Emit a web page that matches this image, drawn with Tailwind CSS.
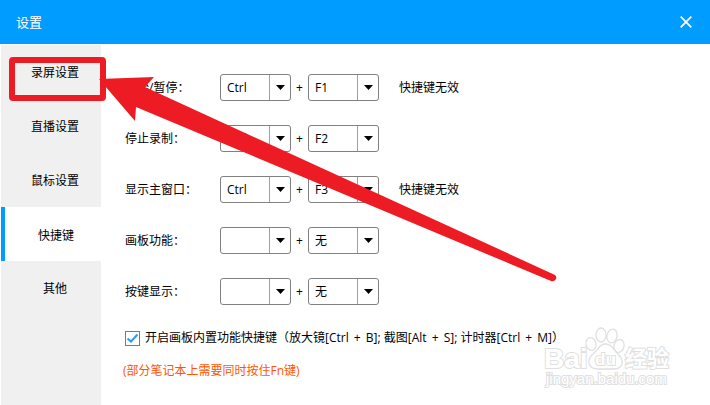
<!DOCTYPE html>
<html lang="zh-CN">
  <head>
    <meta charset="UTF-8" />
    <meta name="viewport" content="width=device-width, initial-scale=1.0" />
    <title>设置</title>
    <script src="https://cdn.jsdelivr.net/npm/@tailwindcss/browser@4"></script>
  </head>
  <body
    class="relative min-h-screen flex flex-col overflow-x-hidden bg-white text-black text-[12px] leading-4 font-['Open_Sans','Noto_Sans_CJK_SC',sans-serif]"
  >
    <header
      class="h-11 shrink-0 flex items-center justify-between pl-4 pr-[18px] bg-[#009cff] text-white"
    >
      <h1 class="text-[13px]">设置</h1>
      <button type="button" aria-label="关闭">
        <svg class="w-3 h-3" viewBox="0 0 12 12" fill="none" stroke="currentColor" stroke-width="1.7">
          <path d="M0.7 0.7 11.3 11.3M11.3 0.7 0.7 11.3" />
        </svg>
      </button>
    </header>

    <div class="flex-1 flex pl-px pt-px">
      <nav class="w-[100px] shrink-0 flex flex-col bg-[#f0f0f0]">
        <a href="#record" class="h-[54px] flex items-center justify-center pl-2 pt-0.5">录屏设置</a>
        <a href="#live" class="h-[54px] flex items-center justify-center pl-2 pt-0.5">直播设置</a>
        <a href="#mouse" class="h-[54px] flex items-center justify-center pl-2 pt-0.5">鼠标设置</a>
        <a
          href="#hotkey"
          class="h-[54px] flex items-center justify-center pl-1.5 pt-1 bg-white border-l-4 border-[#009cff]"
          >快捷键</a
        >
        <a href="#other" class="h-[54px] flex items-center justify-center pl-2 pt-0.5">其他</a>
      </nav>

      <main class="flex-1 pl-6 pt-[29px]">
        <div class="flex flex-col gap-6">
          <!-- start / pause -->
          <div class="flex items-center h-[27px]">
            <label for="start-mod" class="w-[95px]">开始/暂停：</label>
            <div class="relative w-[71px] h-[27px]">
              <select id="start-mod" class="appearance-none w-full h-full pl-[6px] bg-white border border-[#808080] rounded-[3px]">
                <option>Ctrl</option>
              </select>
              <span class="absolute inset-y-px right-px w-[21px] border-l border-[#a0a0a0] flex items-center justify-center pointer-events-none">
                <svg class="w-[9px] h-[5px]" viewBox="0 0 9 5"><path d="M0 0h9L4.5 5z" /></svg>
              </span>
            </div>
            <span class="w-[17px] text-center">+</span>
            <div class="relative w-[71px] h-[27px]">
              <select aria-label="开始/暂停" class="appearance-none w-full h-full pl-[6px] bg-white border border-[#808080] rounded-[3px]">
                <option>F1</option>
              </select>
              <span class="absolute inset-y-px right-px w-[21px] border-l border-[#a0a0a0] flex items-center justify-center pointer-events-none">
                <svg class="w-[9px] h-[5px]" viewBox="0 0 9 5"><path d="M0 0h9L4.5 5z" /></svg>
              </span>
            </div>
            <span class="pl-5">快捷键无效</span>
          </div>

          <!-- stop -->
          <div class="flex items-center h-[27px]">
            <label for="stop-mod" class="w-[95px]">停止录制：</label>
            <div class="relative w-[71px] h-[27px]">
              <select id="stop-mod" class="appearance-none w-full h-full pl-[6px] bg-white border border-[#808080] rounded-[3px]">
                <option>Ctrl</option>
              </select>
              <span class="absolute inset-y-px right-px w-[21px] border-l border-[#a0a0a0] flex items-center justify-center pointer-events-none">
                <svg class="w-[9px] h-[5px]" viewBox="0 0 9 5"><path d="M0 0h9L4.5 5z" /></svg>
              </span>
            </div>
            <span class="w-[17px] text-center">+</span>
            <div class="relative w-[71px] h-[27px]">
              <select aria-label="停止录制" class="appearance-none w-full h-full pl-[6px] bg-white border border-[#808080] rounded-[3px]">
                <option>F2</option>
              </select>
              <span class="absolute inset-y-px right-px w-[21px] border-l border-[#a0a0a0] flex items-center justify-center pointer-events-none">
                <svg class="w-[9px] h-[5px]" viewBox="0 0 9 5"><path d="M0 0h9L4.5 5z" /></svg>
              </span>
            </div>
          </div>

          <!-- show main window -->
          <div class="flex items-center h-[27px]">
            <label for="show-mod" class="w-[95px]">显示主窗口：</label>
            <div class="relative w-[71px] h-[27px]">
              <select id="show-mod" class="appearance-none w-full h-full pl-[6px] bg-white border border-[#808080] rounded-[3px]">
                <option>Ctrl</option>
              </select>
              <span class="absolute inset-y-px right-px w-[21px] border-l border-[#a0a0a0] flex items-center justify-center pointer-events-none">
                <svg class="w-[9px] h-[5px]" viewBox="0 0 9 5"><path d="M0 0h9L4.5 5z" /></svg>
              </span>
            </div>
            <span class="w-[17px] text-center">+</span>
            <div class="relative w-[71px] h-[27px]">
              <select aria-label="显示主窗口" class="appearance-none w-full h-full pl-[6px] bg-white border border-[#808080] rounded-[3px]">
                <option>F3</option>
              </select>
              <span class="absolute inset-y-px right-px w-[21px] border-l border-[#a0a0a0] flex items-center justify-center pointer-events-none">
                <svg class="w-[9px] h-[5px]" viewBox="0 0 9 5"><path d="M0 0h9L4.5 5z" /></svg>
              </span>
            </div>
            <span class="pl-5">快捷键无效</span>
          </div>

          <!-- drawing board -->
          <div class="flex items-center h-[27px]">
            <label for="board-mod" class="w-[95px]">画板功能：</label>
            <div class="relative w-[71px] h-[27px]">
              <select id="board-mod" class="appearance-none w-full h-full pl-[6px] bg-white border border-[#808080] rounded-[3px]">
                <option></option>
              </select>
              <span class="absolute inset-y-px right-px w-[21px] border-l border-[#a0a0a0] flex items-center justify-center pointer-events-none">
                <svg class="w-[9px] h-[5px]" viewBox="0 0 9 5"><path d="M0 0h9L4.5 5z" /></svg>
              </span>
            </div>
            <span class="w-[17px] text-center">+</span>
            <div class="relative w-[71px] h-[27px]">
              <select aria-label="画板功能" class="appearance-none w-full h-full pl-[6px] bg-white border border-[#808080] rounded-[3px]">
                <option>无</option>
              </select>
              <span class="absolute inset-y-px right-px w-[21px] border-l border-[#a0a0a0] flex items-center justify-center pointer-events-none">
                <svg class="w-[9px] h-[5px]" viewBox="0 0 9 5"><path d="M0 0h9L4.5 5z" /></svg>
              </span>
            </div>
          </div>

          <!-- key display -->
          <div class="flex items-center h-[27px]">
            <label for="keys-mod" class="w-[95px]">按键显示：</label>
            <div class="relative w-[71px] h-[27px]">
              <select id="keys-mod" class="appearance-none w-full h-full pl-[6px] bg-white border border-[#808080] rounded-[3px]">
                <option></option>
              </select>
              <span class="absolute inset-y-px right-px w-[21px] border-l border-[#a0a0a0] flex items-center justify-center pointer-events-none">
                <svg class="w-[9px] h-[5px]" viewBox="0 0 9 5"><path d="M0 0h9L4.5 5z" /></svg>
              </span>
            </div>
            <span class="w-[17px] text-center">+</span>
            <div class="relative w-[71px] h-[27px]">
              <select aria-label="按键显示" class="appearance-none w-full h-full pl-[6px] bg-white border border-[#808080] rounded-[3px]">
                <option>无</option>
              </select>
              <span class="absolute inset-y-px right-px w-[21px] border-l border-[#a0a0a0] flex items-center justify-center pointer-events-none">
                <svg class="w-[9px] h-[5px]" viewBox="0 0 9 5"><path d="M0 0h9L4.5 5z" /></svg>
              </span>
            </div>
          </div>
        </div>

        <div class="mt-[25px] flex items-center gap-[5px] whitespace-nowrap">
          <span class="relative w-[15px] h-[15px]">
            <input
              id="board-keys"
              type="checkbox"
              checked
              class="peer block appearance-none w-full h-full bg-white border border-[#009cff]"
            />
            <svg
              class="absolute inset-0 hidden peer-checked:block pointer-events-none"
              viewBox="0 0 15 15"
              fill="none"
              stroke="#2e9bea"
              stroke-width="2"
            >
              <path d="M2.5 7.5 6 10.5 12.5 3.5" />
            </svg>
          </span>
          <label for="board-keys"
            >开启画板内置功能快捷键（放大镜[Ctrl <span class="px-0.5">+</span> B]; 截图[Alt
            <span class="px-0.5">+</span> S]; 计时器[Ctrl <span class="px-0.5">+</span> M]）</label
          >
        </div>
        <p class="mt-[17px] -ml-0.5 text-[#ff5500]">(部分笔记本上需要同时按住Fn键)</p>
      </main>
    </div>

    <!-- watermark -->
    <svg
      class="absolute right-[35px] top-[325px] w-[135px] h-[66px] pointer-events-none"
      viewBox="0 0 135 66"
      fill="#fff"
      stroke="#e0e0e0"
      stroke-width="1.3"
    >
      <ellipse cx="61" cy="10" rx="5" ry="7" />
      <ellipse cx="72" cy="11" rx="5" ry="7" transform="rotate(12 72 11)" />
      <ellipse cx="51" cy="19" rx="5" ry="6.5" transform="rotate(-12 51 19)" />
      <ellipse cx="79" cy="21" rx="5" ry="6.5" transform="rotate(15 79 21)" />
      <path d="M65 19c6 0 8 4 11 8 4 4 7 7 6 12-1 4-5 5-9 5-5 0-11 0-15 0-5 0-8-2-9-6-1-5 3-8 7-12 3-3 4-7 9-7z" />
      <g
        font-family="Liberation Sans, Noto Sans CJK SC, sans-serif"
        font-weight="700"
        stroke-width="2"
        paint-order="stroke"
      >
        <text x="4" y="43" font-size="28">Bai</text>
        <text x="55" y="40" font-size="17">du</text>
        <text x="85" y="41" font-size="22">经验</text>
      </g>
      <text
        x="6"
        y="59"
        font-size="15"
        stroke-width="2"
        paint-order="stroke"
        font-family="Liberation Sans, sans-serif"
      >
        jingyan.baidu.com
      </text>
    </svg>

    <!-- pointer to the first tab -->
    <svg
      class="absolute left-0 top-0 w-[710px] h-[405px] pointer-events-none"
      viewBox="0 0 710 405"
      fill="#ed1c24"
    >
      <rect x="12" y="60" width="91" height="38" rx="1" fill="none" stroke="#ed1c24" stroke-width="6" />
      <path d="M99 79 154 77 145 87 555 275Q557 277 556 279 554 282 551 281L136 107 135 121Z" />
    </svg>
  </body>
</html>
